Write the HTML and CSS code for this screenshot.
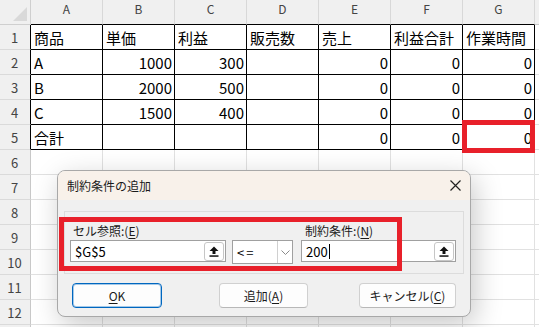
FILE: index.html
```html
<!DOCTYPE html>
<html lang="ja">
<head>
<meta charset="utf-8">
<link rel="stylesheet" href="styles.css">
</head>
<body>
<div class="sheet">
  <div class="grid">
    <div class="corner"><svg class="tri" width="16" height="16" viewBox="0 0 16 16"><polygon points="15,1 15,15 1,15" fill="#d9d9d9"/></svg></div>
    <div class="ch tb">A</div><div class="ch tb">B</div><div class="ch tb">C</div><div class="ch tb">D</div><div class="ch tb">E</div><div class="ch tb">F</div><div class="ch tb">G</div><div class="ch"></div>

    <div class="rh tr">1</div>
    <div class="c t">商品</div><div class="c t">単価</div><div class="c t">利益</div><div class="c t">販売数</div><div class="c t">売上</div><div class="c t">利益合計</div><div class="c t">作業時間</div><div class="c"></div>

    <div class="rh tr">2</div>
    <div class="c t">A</div><div class="c t n">1000</div><div class="c t n">300</div><div class="c t"></div><div class="c t n">0</div><div class="c t n">0</div><div class="c t n">0</div><div class="c"></div>

    <div class="rh tr">3</div>
    <div class="c t">B</div><div class="c t n">2000</div><div class="c t n">500</div><div class="c t"></div><div class="c t n">0</div><div class="c t n">0</div><div class="c t n">0</div><div class="c"></div>

    <div class="rh tr">4</div>
    <div class="c t">C</div><div class="c t n">1500</div><div class="c t n">400</div><div class="c t"></div><div class="c t n">0</div><div class="c t n">0</div><div class="c t n">0</div><div class="c"></div>

    <div class="rh tr">5</div>
    <div class="c t">合計</div><div class="c t"></div><div class="c t"></div><div class="c t"></div><div class="c t n">0</div><div class="c t n">0</div><div class="c t n">0</div><div class="c"></div>

    <div class="rh">6</div><div class="c"></div><div class="c"></div><div class="c"></div><div class="c"></div><div class="c"></div><div class="c"></div><div class="c"></div><div class="c"></div>
    <div class="rh">7</div><div class="c"></div><div class="c"></div><div class="c"></div><div class="c"></div><div class="c"></div><div class="c"></div><div class="c"></div><div class="c"></div>
    <div class="rh">8</div><div class="c"></div><div class="c"></div><div class="c"></div><div class="c"></div><div class="c"></div><div class="c"></div><div class="c"></div><div class="c"></div>
    <div class="rh">9</div><div class="c"></div><div class="c"></div><div class="c"></div><div class="c"></div><div class="c"></div><div class="c"></div><div class="c"></div><div class="c"></div>
    <div class="rh">10</div><div class="c"></div><div class="c"></div><div class="c"></div><div class="c"></div><div class="c"></div><div class="c"></div><div class="c"></div><div class="c"></div>
    <div class="rh">11</div><div class="c"></div><div class="c"></div><div class="c"></div><div class="c"></div><div class="c"></div><div class="c"></div><div class="c"></div><div class="c"></div>
    <div class="rh">12</div><div class="c"></div><div class="c"></div><div class="c"></div><div class="c"></div><div class="c"></div><div class="c"></div><div class="c"></div><div class="c"></div>
    <div class="rh"></div><div class="c"></div><div class="c"></div><div class="c"></div><div class="c"></div><div class="c"></div><div class="c"></div><div class="c"></div><div class="c"></div>
  </div>

  <div class="mark mark-g5"></div>

  <div class="dialog">
    <div class="titlebar">
      <span class="title">制約条件の追加</span>
      <span class="close"><svg width="11" height="11" viewBox="0 0 11 11"><path d="M0.5 0.5 L10.5 10.5 M10.5 0.5 L0.5 10.5" stroke="#222" stroke-width="1.2" fill="none"/></svg></span>
    </div>
    <div class="body">
      <div class="group">
        <div class="fields">
          <div class="field f1">
            <div class="label">セル参照:(<u>E</u>)</div>
            <div class="input">
              <span class="val">$G$5</span>
              <span class="refbtn"><svg width="10" height="11" viewBox="0 0 10 11"><path d="M5 0.5 L9.5 5 H6.5 V8 H3.5 V5 H0.5 Z" fill="#111"/><rect x="0.5" y="9.3" width="9" height="1.5" fill="#111"/></svg></span>
            </div>
          </div>
          <div class="field f2">
            <div class="label"></div>
            <div class="select">
              <span class="val op">&lt;=</span>
              <span class="arrow"><svg width="9" height="5" viewBox="0 0 9 5"><path d="M0.5 0.5 L4.5 4.5 L8.5 0.5" stroke="#8a8a8a" stroke-width="1" fill="none"/></svg></span>
            </div>
          </div>
          <div class="field f3">
            <div class="label">制約条件:(<u>N</u>)</div>
            <div class="input">
              <span class="val">200<span class="caret"></span></span>
              <span class="refbtn"><svg width="10" height="11" viewBox="0 0 10 11"><path d="M5 0.5 L9.5 5 H6.5 V8 H3.5 V5 H0.5 Z" fill="#111"/><rect x="0.5" y="9.3" width="9" height="1.5" fill="#111"/></svg></span>
            </div>
          </div>
        </div>
      </div>
      <div class="buttons">
        <button class="btn btn-ok"><u>O</u>K</button>
        <button class="btn btn-add">追加(<u>A</u>)</button>
        <button class="btn btn-cancel">キャンセル(<u>C</u>)</button>
      </div>
    </div>
  </div>

  <div class="mark mark-dlg"></div>
</div>
</body>
</html>
```

FILE: styles.css
```css
html, body {
  margin: 0;
  padding: 0;
  background: #ffffff;
  overflow: hidden;
}
body {
  width: 539px;
  height: 327px;
  font-family: "Noto Sans CJK JP", "Noto Sans", sans-serif;
}
.sheet {
  position: relative;
  width: 539px;
  height: 327px;
  overflow: hidden;
}
.grid {
  display: grid;
  grid-template-columns: 31px repeat(7, 72px) 1fr;
  grid-auto-rows: 25px;
}
.grid > div {
  box-sizing: border-box;
  border-right: 1px solid #e1e1e1;
  border-bottom: 1px solid #e1e1e1;
}
.corner {
  background: #f0f0f0;
  position: relative;
  border-right-color: #cfcfcf !important;
  border-bottom-color: #cfcfcf !important;
}
.tri {
  position: absolute;
  right: 2px;
  bottom: 2px;
}
.ch {
  background: #f0f0f0;
  border-right-color: #d8d8d8 !important;
  border-bottom-color: #c8c8c8 !important;
  color: #444;
  font-size: 12px;
  line-height: 14px;
  text-align: center;
  padding-top: 2px;
}
.ch.tb {
  border-bottom-color: #000 !important;
}
.rh {
  background: #f0f0f0;
  border-right-color: #c8c8c8 !important;
  border-bottom-color: #dadada !important;
  color: #444;
  font-size: 13px;
  display: flex;
  align-items: center;
  justify-content: center;
  padding-right: 1px;
}
.rh.tr {
  border-right-color: #000 !important;
}
.c {
  font-size: 15px;
  color: #000;
  display: flex;
  align-items: center;
  padding: 0 3px;
  white-space: nowrap;
  overflow: hidden;
}
.c.t {
  border-right-color: #000 !important;
  border-bottom-color: #000 !important;
}
.c.n {
  justify-content: flex-end;
  padding-right: 2px;
}

.mark {
  position: absolute;
  box-sizing: border-box;
  border: 5px solid #e8202a;
  z-index: 5;
}
.mark-g5 {
  left: 462px;
  top: 120px;
  width: 73px;
  height: 33px;
}
.mark-dlg {
  left: 59px;
  top: 217px;
  width: 343px;
  height: 54px;
}

.dialog {
  position: absolute;
  left: 57px;
  top: 170px;
  width: 414px;
  height: 147px;
  box-sizing: border-box;
  border: 1px solid #a8a8a8;
  border-radius: 8px;
  background: #f0f0f0;
  overflow: hidden;
  box-shadow: 4px 8px 28px rgba(0, 0, 0, 0.22);
  z-index: 3;
}
.titlebar {
  height: 29px;
  background: #f8f1ea;
  display: flex;
  align-items: center;
  justify-content: space-between;
  padding-left: 9px;
}
.title {
  font-size: 12px;
  color: #1a1a1a;
}
.close {
  width: 30px;
  display: flex;
  justify-content: center;
  align-items: center;
}
.body {
  padding: 11px 0 0 6px;
}
.group {
  width: 400px;
  height: 63px;
  box-sizing: border-box;
  border: 1px solid #dcdcdc;
  padding: 0 0 0 5px;
}
.fields {
  display: flex;
  align-items: flex-start;
}
.field {
  display: flex;
  flex-direction: column;
}
.f1 { width: 156px; margin-right: 6px; }
.f2 { width: 61px; margin-right: 8px; }
.f3 { width: 155px; }
.label {
  height: 16px;
  margin: 11px 0 1px 3px;
  font-size: 12px;
  line-height: 16px;
  color: #1a1a1a;
  white-space: nowrap;
}
.f3 .label { margin-left: 4px; }
.label u { text-underline-offset: 2px; }
.input {
  height: 22px;
  box-sizing: border-box;
  border: 1px solid #a0a0a0;
  background: #fff;
  display: flex;
  align-items: center;
  justify-content: space-between;
  padding: 0 1px 0 4px;
}
.val {
  font-size: 13px;
  color: #000;
  display: flex;
  align-items: center;
}
.op {
  letter-spacing: 2px;
}
.caret {
  display: inline-block;
  width: 1px;
  height: 15px;
  background: #000;
  margin-left: 1px;
}
.refbtn {
  width: 20px;
  height: 19px;
  box-sizing: border-box;
  border: 1px solid #c6c6c6;
  border-radius: 3px;
  background: #fff;
  display: flex;
  align-items: center;
  justify-content: center;
}
.select {
  height: 24px;
  box-sizing: border-box;
  border: 1px solid #a0a0a0;
  background: #fff;
  display: flex;
  align-items: stretch;
  justify-content: space-between;
  padding-left: 4px;
}
.arrow {
  width: 15px;
  box-sizing: border-box;
  border-left: 1px solid #d0d0d0;
  display: flex;
  align-items: center;
  justify-content: center;
}
.buttons {
  display: flex;
  margin-top: 9px;
  padding-left: 8px;
}
.btn {
  height: 25px;
  box-sizing: border-box;
  border: 1px solid #d0d0d0;
  border-bottom-color: #b8b8b8;
  border-radius: 4px;
  background: #fdfdfd;
  font-family: "Noto Sans CJK JP", "Noto Sans", sans-serif;
  font-size: 12px;
  color: #1a1a1a;
  padding: 0;
  display: flex;
  align-items: center;
  justify-content: center;
}
.btn u { text-underline-offset: 2px; }
.btn-ok {
  width: 90px;
  border: 1px solid #0067c0;
  box-shadow: inset 0 0 0 1px rgba(0, 103, 192, 0.35);
}
.btn-add { width: 89px; margin-left: 57px; }
.btn-cancel { width: 97px; margin-left: 51px; }
```
